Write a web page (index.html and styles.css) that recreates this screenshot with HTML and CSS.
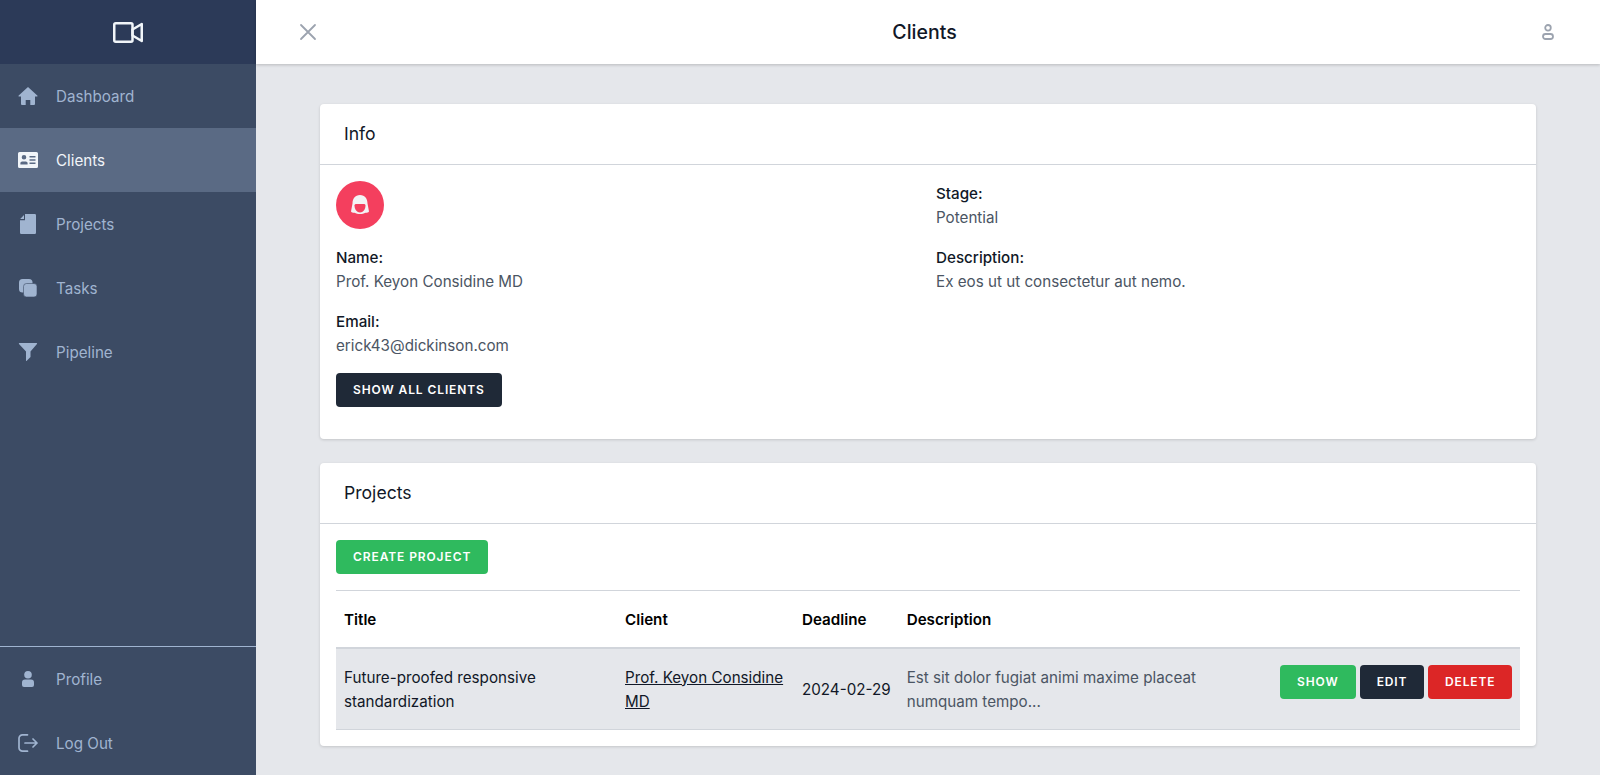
FILE: index.html
```html
<!DOCTYPE html>
<html lang="en">

<head>
    <meta charset="UTF-8">
    <title>Clients</title>
    <link rel="stylesheet" href="styles.css">
</head>

<body>
    <div class="app">
        <aside class="sidebar">
            <div class="logo">
                <svg width="32" height="24" viewBox="0 0 32 24" fill="none" stroke="currentColor" stroke-width="2.500"
                    stroke-linejoin="round">
                    <rect x="2.250" y="3.250" width="18.250" height="18.500" rx="1.500"></rect>
                    <path d="M20.500 9.500l9.250-5.500v17l-9.250-5.500z"></path>
                </svg>
            </div>
            <ul class="nav">
                <li><a href="#">
                        <svg class="nav-icon" viewBox="0 0 20 20" fill="currentColor">
                            <path d="M10 1l9.300 8.600a.5.5 0 0 1-.3.9h-2V18a1 1 0 0 1-1 1h-3.700v-5H7.700v5H4a1 1 0 0 1-1-1v-7.500H1a.5.5 0 0 1-.3-.9z"></path>
                        </svg>
                        <span>Dashboard</span></a></li>
                <li class="active"><a href="#">
                        <svg class="nav-icon" viewBox="0 0 20 20" fill="currentColor">
                            <path fill-rule="evenodd" d="M1.500 2h17A1.500 1.500 0 0 1 20 3.500v13a1.500 1.500 0 0 1-1.500 1.500h-17A1.500 1.500 0 0 1 0 16.500v-13A1.500 1.500 0 0 1 1.500 2zM6 5a2.300 2.300 0 1 0 0 4.600A2.300 2.300 0 0 0 6 5zM2.400 14.500h7.200v-1.300c0-1-.8-1.800-1.800-1.800H4.200c-1 0-1.800.8-1.800 1.800zM11.500 6v1.500h6V6zM11.500 9.200v1.500h6V9.200zM11.500 12.400v1.500h6v-1.500z"></path>
                        </svg>
                        <span>Clients</span></a></li>
                <li><a href="#">
                        <svg class="nav-icon" viewBox="0 0 20 20" fill="currentColor">
                            <path d="M7 0h9.800A1.200 1.200 0 0 1 18 1.200v17.600a1.200 1.200 0 0 1-1.200 1.200H3.200A1.200 1.200 0 0 1 2 18.800V6.200h4.500a.5.5 0 0 0 .5-.5zM2.200 5L6 1v4z"></path>
                        </svg>
                        <span>Projects</span></a></li>
                <li><a href="#">
                        <svg class="nav-icon" viewBox="0 0 20 20" fill="currentColor">
                            <rect x="1" y="1" width="13.500" height="13.500" rx="3.500"></rect>
                            <rect class="task-front" x="5.500" y="5.500" width="13.500" height="13.500" rx="3"></rect>
                        </svg>
                        <span>Tasks</span></a></li>
                <li><a href="#">
                        <svg class="nav-icon" viewBox="0 0 20 20" fill="currentColor">
                            <path d="M1.500 1h17a.6.6 0 0 1 .45 1L12.500 9.500V15l-4 4a.3.3 0 0 1-.5-.2V9.500L1 2a.6.6 0 0 1 .5-1z"></path>
                        </svg>
                        <span>Pipeline</span></a></li>
            </ul>
            <ul class="nav nav-bottom">
                <li><a href="#">
                        <svg class="nav-icon" viewBox="0 0 20 20" fill="currentColor">
                            <circle cx="10" cy="5.800" r="3.800"></circle>
                            <path d="M7 10.500h6a3 3 0 0 1 3 3V16a2 2 0 0 1-2 2H6a2 2 0 0 1-2-2v-2.500a3 3 0 0 1 3-3z"></path>
                        </svg>
                        <span>Profile</span></a></li>
                <li><a href="#">
                        <svg class="nav-icon" viewBox="0 0 20 20" fill="none" stroke="currentColor" stroke-width="1.700"
                            stroke-linecap="round" stroke-linejoin="round">
                            <path d="M9.500 1.850H4.500a3.500 3.500 0 0 0-3.500 3.500v9.300a3.500 3.500 0 0 0 3.500 3.500h5"></path>
                            <path d="M7 10h12M15 6l4 4-4 4"></path>
                        </svg>
                        <span>Log Out</span></a></li>
            </ul>
        </aside>

        <div class="main">
            <header class="topbar">
                <svg class="close-icon" viewBox="0 0 24 24" fill="none" stroke="currentColor" stroke-width="1.800"
                    stroke-linecap="round">
                    <path d="M5 5l14 14M19 5L5 19"></path>
                </svg>
                <h1>Clients</h1>
                <svg class="user-icon" viewBox="0 0 12 16" fill="none" stroke="currentColor" stroke-width="1.800">
                    <circle cx="6" cy="3.800" r="2.800"></circle>
                    <rect x="1" y="10" width="10" height="5" rx="2.500"></rect>
                </svg>
            </header>

            <main class="content">
                <section class="card">
                    <h2 class="card-title">Info</h2>
                    <div class="card-body info-grid">
                        <div>
                            <div class="avatar">
                                <svg width="24" height="24" viewBox="0 0 24 24">
                                    <path fill="#f3f3f4" d="M12 2c5 0 7.500 4 7.500 8.500l1.500 8c-1 1.500-2.500 1.300-3.500 1.300-1.500 1-3.500 1.200-5.500 1.200s-4-.2-5.500-1.200c-1 0-2.500.2-3.500-1.300l1.500-8C4.500 6 7 2 12 2z"></path>
                                    <path fill="#f43f5e" d="M6.500 12.500c0-1 .8-1.500 1.500-1.500h8c.7 0 1.500.5 1.500 1.500 0 4-2.500 7-5.500 7s-5.500-3-5.500-7z"></path>
                                </svg>
                            </div>
                            <div class="field">
                                <div class="field-label">Name:</div>
                                <div class="field-value">Prof. Keyon Considine MD</div>
                            </div>
                            <div class="field">
                                <div class="field-label">Email:</div>
                                <div class="field-value">erick43@dickinson.com</div>
                            </div>
                            <a href="#" class="btn btn-dark btn-all">Show all clients</a>
                        </div>
                        <div>
                            <div class="field field-first">
                                <div class="field-label">Stage:</div>
                                <div class="field-value">Potential</div>
                            </div>
                            <div class="field">
                                <div class="field-label">Description:</div>
                                <div class="field-value">Ex eos ut ut consectetur aut nemo.</div>
                            </div>
                        </div>
                    </div>
                </section>

                <section class="card">
                    <h2 class="card-title">Projects</h2>
                    <div class="card-body">
                        <a href="#" class="btn btn-green">Create project</a>
                        <table class="table">
                            <thead>
                                <tr>
                                    <th>Title</th>
                                    <th>Client</th>
                                    <th>Deadline</th>
                                    <th>Description</th>
                                    <th></th>
                                </tr>
                            </thead>
                            <tbody>
                                <tr>
                                    <td class="col-title">Future-proofed responsive standardization</td>
                                    <td class="col-client"><a href="#">Prof. Keyon Considine MD</a></td>
                                    <td class="col-date">2024-02-29</td>
                                    <td class="col-desc">Est sit dolor fugiat animi maxime placeat numquam tempo...</td>
                                    <td class="col-actions">
                                        <div class="actions">
                                            <a href="#" class="btn btn-green">Show</a>
                                            <a href="#" class="btn btn-dark">Edit</a>
                                            <a href="#" class="btn btn-red">Delete</a>
                                        </div>
                                    </td>
                                </tr>
                            </tbody>
                        </table>
                    </div>
                </section>
            </main>
        </div>
    </div>
</body>

</html>
```

FILE: styles.css
```css
* {
    box-sizing: border-box;
}

html,
body {
    height: 100%;
}

body {
    margin: 0;
    font-family: "Inter", "Liberation Sans", sans-serif;
    font-size: 15.200px;
    line-height: 24px;
    color: #111827;
    background: #e5e7eb;
}

a {
    color: inherit;
    text-decoration: none;
}

.app {
    display: flex;
    height: 100vh;
    overflow: hidden;
}

/* sidebar */
.sidebar {
    width: 256px;
    flex-shrink: 0;
    display: flex;
    flex-direction: column;
    background: #3c4b64;
    color: #a0b4d0;
}

.logo {
    height: 64px;
    display: flex;
    align-items: center;
    justify-content: center;
    background: #2c3a58;
    color: #f1f5f9;
}

.nav {
    list-style: none;
    margin: 0;
    padding: 0;
}

.nav a {
    height: 64px;
    display: flex;
    align-items: center;
    gap: 18px;
    padding: 0 18px;
}

.nav span {
    padding-top: 2px;
}

.nav .active a {
    background: #5a6a84;
    color: #f1f5f9;
}

.nav-icon {
    width: 20px;
    height: 20px;
    flex-shrink: 0;
}

.task-front {
    stroke: #3c4b64;
    stroke-width: .6;
}

.nav-bottom {
    margin-top: auto;
    border-top: 1px solid #a0b4d0;
}

/* top bar */
.main {
    flex: 1;
    min-width: 0;
    display: flex;
    flex-direction: column;
}

.topbar {
    height: 64px;
    flex-shrink: 0;
    display: flex;
    align-items: center;
    padding: 0 46px 0 40px;
    background: #fff;
    box-shadow: 0 1px 3px rgba(0, 0, 0, .2);
}

.topbar h1 {
    flex: 1;
    margin: 0;
    padding-right: 13px;
    font-size: 19.500px;
    font-weight: 500;
    text-align: center;
}

.close-icon {
    width: 24px;
    height: 24px;
    color: #9ca3af;
}

.user-icon {
    width: 12px;
    height: 16px;
    color: #9ca3af;
}

/* cards */
.content {
    flex: 1;
    padding: 40px 64px;
}

.card {
    margin-bottom: 24px;
    background: #fff;
    border-radius: 4px;
    box-shadow: 0 1px 3px rgba(0, 0, 0, .15);
}

.card-title {
    height: 61px;
    margin: 0;
    padding: 0 24px;
    font-size: 17.600px;
    font-weight: 400;
    line-height: 60px;
    border-bottom: 1px solid #d1d5db;
}

.card-body {
    padding: 16px;
}

.info-grid {
    display: grid;
    grid-template-columns: 1fr 1fr;
    gap: 16px;
    padding-bottom: 32px;
}

.avatar {
    width: 48px;
    height: 48px;
    margin-bottom: 17px;
    display: flex;
    align-items: center;
    justify-content: center;
    border-radius: 50%;
    background: #f43f5e;
}

.field {
    margin-top: 16px;
}

.field-first {
    margin-top: 1px;
}

.field-label {
    font-weight: 500;
}

.field-value {
    color: #4b5563;
}

/* buttons */
.btn {
    display: inline-block;
    height: 34px;
    padding: 0 17px;
    border-radius: 4px;
    font-size: 12px;
    font-weight: 600;
    line-height: 34px;
    letter-spacing: .9px;
    text-transform: uppercase;
    color: #fff;
}

.btn-all {
    margin-top: 15px;
}

.btn-dark {
    background: #1f2937;
}

.btn-green {
    background: #2fba5e;
}

.btn-red {
    padding: 0 16.500px;
    background: #dc2626;
}

/* table */
.table {
    width: 100%;
    margin-top: 16px;
    border-collapse: collapse;
    border-top: 1px solid #d1d5db;
}

.table th {
    height: 57px;
    padding: 2px 8px 0;
    font-weight: 600;
    text-align: left;
    color: #000;
}

.table td {
    height: 82px;
    padding: 2px 8px 0;
    background: #e5e7eb;
    border-top: 2px solid #d1d5db;
    border-bottom: 1px solid #d1d5db;
}

.col-title {
    width: 281px;
}

.col-client {
    width: 177px;
}

.col-client a {
    text-decoration: underline;
}

.col-date {
    width: 104px;
    white-space: nowrap;
}

.col-desc {
    color: #4b5563;
}

.table .col-actions {
    width: 250px;
    padding-top: 16px;
    vertical-align: top;
}

.actions {
    display: flex;
    justify-content: flex-end;
    gap: 4px;
}
```
